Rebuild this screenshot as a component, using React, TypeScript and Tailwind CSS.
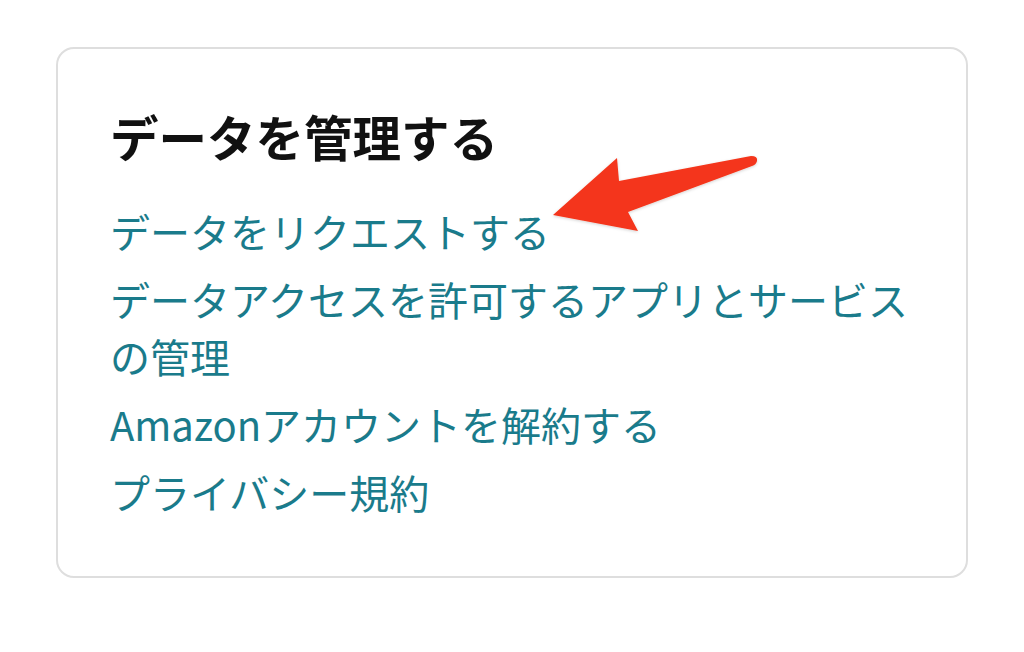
import React from "react";

const links: string[] = [
  "データをリクエストする",
  "データアクセスを許可するアプリとサービスの管理",
  "Amazonアカウントを解約する",
  "プライバシー規約",
];

export default function App() {
  return (
    <div
      className="relative min-h-[652px] w-[1024px] bg-white pl-[56px] pt-[47px]"
      style={{ fontFamily: '"Noto Sans CJK JP", "Noto Sans", sans-serif' }}
    >
      <div className="w-[912px] rounded-[18px] border-2 border-[#dedede] pb-[55px] pl-[52px] pr-[52px] pt-[60px]">
        <h1 className="text-[48.5px] font-bold leading-[55px] text-[#111111]">
          データを管理する
        </h1>
        <div className="mt-[39px] flex flex-col gap-[11px]">
          {links.map((l) => (
            <a key={l} className="block text-[40px] leading-[57px] text-[#1a7b8b]">
              {l}
            </a>
          ))}
        </div>
      </div>

      <svg
        className="absolute left-0 top-0"
        width="1024"
        height="652"
        viewBox="0 0 1024 652"
      >
        <defs>
          <filter id="sh" x="-10%" y="-20%" width="120%" height="140%">
            <feDropShadow dx="0" dy="1" stdDeviation="1.5" floodColor="#000" floodOpacity="0.18" />
          </filter>
        </defs>
        <path
          d="M553 215 L617 158 L619 181 L751 156 Q758 156 757 161 Q756 165 752 166 L628 212 L638 231 Z"
          fill="#f4361a"
          filter="url(#sh)"
        />
      </svg>
    </div>
  );
}
